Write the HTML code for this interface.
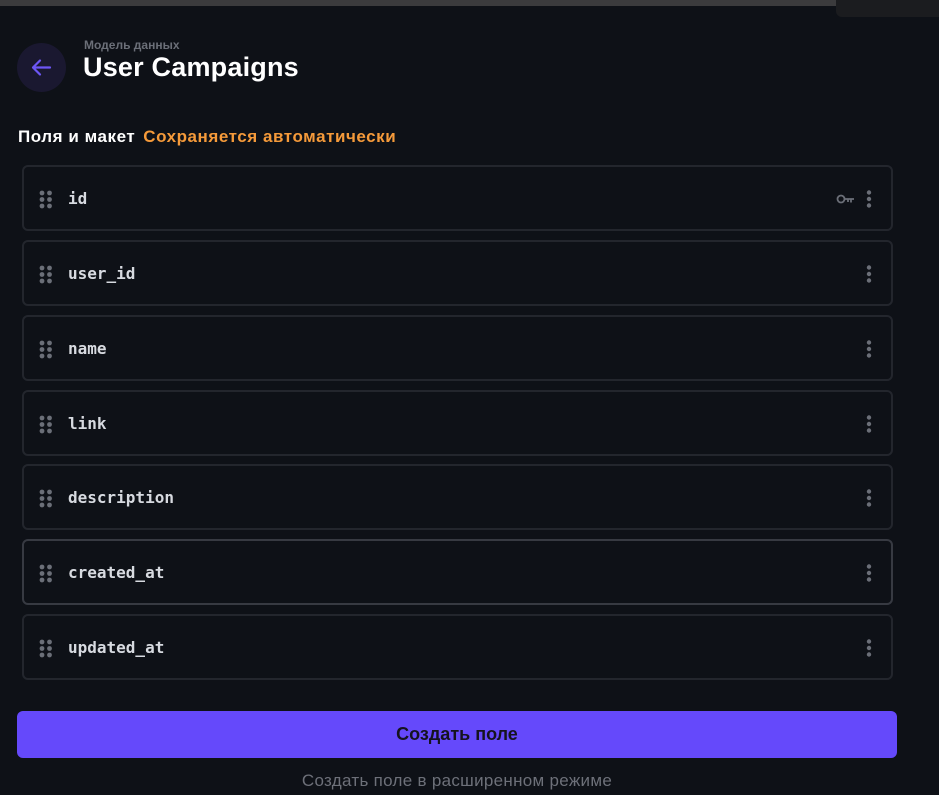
<!DOCTYPE html>
<html><head><meta charset="utf-8"><style>
*{margin:0;padding:0;box-sizing:border-box}
body{width:939px;height:795px;background:#0e1117;font-family:"Liberation Sans","Noto Sans CJK SC",sans-serif;position:relative;overflow:hidden}
.topbar{position:absolute;left:0;top:0;width:939px;height:6px;background:#3b3b3d}
.tr{position:absolute;left:836px;top:0;width:103px;height:17px;background:#1b1c1f;border-bottom-left-radius:6px}
.back{position:absolute;left:17px;top:43px;width:49px;height:49px;border-radius:50%;background:#1a1830}
.sub{position:absolute;left:84px;top:38px;font-size:12px;color:#6b6f78;font-weight:bold}
.title{position:absolute;left:83px;top:52px;font-size:27px;color:#fff;font-weight:bold;letter-spacing:0.2px}
.sec{position:absolute;left:18px;top:127px;font-size:17px;font-weight:bold;color:#fff;letter-spacing:0.55px}
.sec span{color:#f59a3a;margin-left:8px}
.row{position:absolute;left:22px;width:871px;height:66px;border:2px solid #23262d;border-radius:6px}
.row.hl{border-color:#373a42}
.row .n{position:absolute;left:44px;top:22px;font-family:"DejaVu Sans Mono","Liberation Mono",monospace;font-size:16px;color:#d7dae0;font-weight:bold}
.drag{position:absolute;left:15px;top:23px}
.dots{position:absolute;left:842px;top:23px}
.key{position:absolute;left:812px;top:26px}
.btn{position:absolute;left:17px;top:711px;width:880px;height:47px;background:#6549fb;border-radius:6px;text-align:center;line-height:47px;font-size:18px;font-weight:bold;color:#15131f}
.adv{position:absolute;left:0;width:914px;top:771px;text-align:center;font-size:17px;letter-spacing:0.3px;color:#6d7079}
</style></head><body>
<div class="topbar"></div><div class="tr"></div>
<div class="back"><svg width="49" height="49" viewBox="0 0 49 49"><path d="M33 24.5H16M23 17.5l-7 7 7 7" stroke="#6d56f5" stroke-width="2.2" fill="none" stroke-linecap="round" stroke-linejoin="round"/></svg></div>
<div class="sub">Модель данных</div>
<div class="title">User Campaigns</div>
<div class="sec">Поля и макет<span>Сохраняется автоматически</span></div>

<div class="row" style="top:165px"><svg class="drag" width="14" height="19"><g fill="#6b6f78"><circle cx="3" cy="3" r="2.4"/><circle cx="10.5" cy="3" r="2.4"/><circle cx="3" cy="9.5" r="2.4"/><circle cx="10.5" cy="9.5" r="2.4"/><circle cx="3" cy="16" r="2.4"/><circle cx="10.5" cy="16" r="2.4"/></g></svg><div class="n">id</div>
<svg class="key" width="20" height="12" viewBox="0 0 20 12"><circle cx="5" cy="6" r="3.5" stroke="#6b6f78" stroke-width="1.8" fill="none"/><path d="M8.5 6H18M15 6v3.5M12 6v3" stroke="#6b6f78" stroke-width="1.8" fill="none"/></svg>
<svg class="dots" width="6" height="18"><g fill="#6b6f78"><circle cx="3" cy="2.5" r="2.2"/><circle cx="3" cy="9" r="2.2"/><circle cx="3" cy="15.5" r="2.2"/></g></svg></div>

<div class="row" style="top:240px"><svg class="drag" width="14" height="19"><g fill="#6b6f78"><circle cx="3" cy="3" r="2.4"/><circle cx="10.5" cy="3" r="2.4"/><circle cx="3" cy="9.5" r="2.4"/><circle cx="10.5" cy="9.5" r="2.4"/><circle cx="3" cy="16" r="2.4"/><circle cx="10.5" cy="16" r="2.4"/></g></svg><div class="n">user_id</div><svg class="dots" width="6" height="18"><g fill="#6b6f78"><circle cx="3" cy="2.5" r="2.2"/><circle cx="3" cy="9" r="2.2"/><circle cx="3" cy="15.5" r="2.2"/></g></svg></div>

<div class="row" style="top:315px"><svg class="drag" width="14" height="19"><g fill="#6b6f78"><circle cx="3" cy="3" r="2.4"/><circle cx="10.5" cy="3" r="2.4"/><circle cx="3" cy="9.5" r="2.4"/><circle cx="10.5" cy="9.5" r="2.4"/><circle cx="3" cy="16" r="2.4"/><circle cx="10.5" cy="16" r="2.4"/></g></svg><div class="n">name</div><svg class="dots" width="6" height="18"><g fill="#6b6f78"><circle cx="3" cy="2.5" r="2.2"/><circle cx="3" cy="9" r="2.2"/><circle cx="3" cy="15.5" r="2.2"/></g></svg></div>

<div class="row" style="top:390px"><svg class="drag" width="14" height="19"><g fill="#6b6f78"><circle cx="3" cy="3" r="2.4"/><circle cx="10.5" cy="3" r="2.4"/><circle cx="3" cy="9.5" r="2.4"/><circle cx="10.5" cy="9.5" r="2.4"/><circle cx="3" cy="16" r="2.4"/><circle cx="10.5" cy="16" r="2.4"/></g></svg><div class="n">link</div><svg class="dots" width="6" height="18"><g fill="#6b6f78"><circle cx="3" cy="2.5" r="2.2"/><circle cx="3" cy="9" r="2.2"/><circle cx="3" cy="15.5" r="2.2"/></g></svg></div>

<div class="row" style="top:464px"><svg class="drag" width="14" height="19"><g fill="#6b6f78"><circle cx="3" cy="3" r="2.4"/><circle cx="10.5" cy="3" r="2.4"/><circle cx="3" cy="9.5" r="2.4"/><circle cx="10.5" cy="9.5" r="2.4"/><circle cx="3" cy="16" r="2.4"/><circle cx="10.5" cy="16" r="2.4"/></g></svg><div class="n">description</div><svg class="dots" width="6" height="18"><g fill="#6b6f78"><circle cx="3" cy="2.5" r="2.2"/><circle cx="3" cy="9" r="2.2"/><circle cx="3" cy="15.5" r="2.2"/></g></svg></div>

<div class="row hl" style="top:539px"><svg class="drag" width="14" height="19"><g fill="#6b6f78"><circle cx="3" cy="3" r="2.4"/><circle cx="10.5" cy="3" r="2.4"/><circle cx="3" cy="9.5" r="2.4"/><circle cx="10.5" cy="9.5" r="2.4"/><circle cx="3" cy="16" r="2.4"/><circle cx="10.5" cy="16" r="2.4"/></g></svg><div class="n">created_at</div><svg class="dots" width="6" height="18"><g fill="#6b6f78"><circle cx="3" cy="2.5" r="2.2"/><circle cx="3" cy="9" r="2.2"/><circle cx="3" cy="15.5" r="2.2"/></g></svg></div>

<div class="row" style="top:614px"><svg class="drag" width="14" height="19"><g fill="#6b6f78"><circle cx="3" cy="3" r="2.4"/><circle cx="10.5" cy="3" r="2.4"/><circle cx="3" cy="9.5" r="2.4"/><circle cx="10.5" cy="9.5" r="2.4"/><circle cx="3" cy="16" r="2.4"/><circle cx="10.5" cy="16" r="2.4"/></g></svg><div class="n">updated_at</div><svg class="dots" width="6" height="18"><g fill="#6b6f78"><circle cx="3" cy="2.5" r="2.2"/><circle cx="3" cy="9" r="2.2"/><circle cx="3" cy="15.5" r="2.2"/></g></svg></div>

<div class="btn">Создать поле</div>
<div class="adv">Создать поле в расширенном режиме</div>
</body></html>
